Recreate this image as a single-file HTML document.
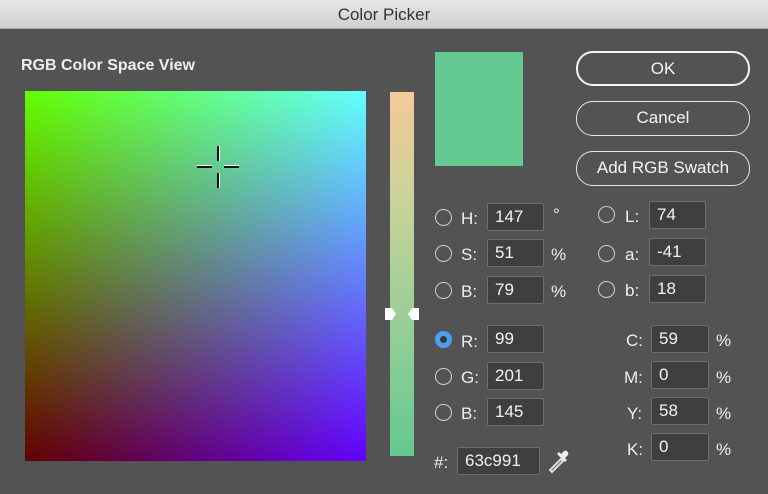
<!DOCTYPE html>
<html><head><meta charset="utf-8"><style>
*{margin:0;padding:0;box-sizing:border-box}
body{width:768px;height:494px;background:#535353;font-family:"Liberation Sans",sans-serif;color:#f0f0f0;position:relative;overflow:hidden}
.title{position:absolute;left:0;top:0;width:768px;height:29px;background:linear-gradient(#e6e6e6,#cfcfcf);border-bottom:1px solid #a8a8a8;text-align:center;font-size:17px;line-height:29px;color:#333}
.a{position:absolute}
.lbl{font-size:16px;font-weight:bold;color:#eee}
.sq{left:25px;top:91px;width:341px;height:370px;background:linear-gradient(to right,rgb(99,0,0),rgb(99,0,255))}
.sq2{position:absolute;inset:0;background:linear-gradient(rgb(0,255,0),rgb(0,0,0));mix-blend-mode:screen}
.bar{left:390px;top:92px;width:24px;height:364px;background:linear-gradient(#f5c998,#c9d39a 30%,#63c991)}
.sw{left:435px;top:52px;width:88px;height:114px;background:#63c991}
.btn{position:absolute;left:576px;width:174px;height:35px;border:2px solid #f4f4f4;border-radius:17px;text-align:center;font-size:17px;line-height:32px;color:#f4f4f4}
.btn.c{border-color:#e6e6e6;border-width:1.5px}
.f{position:absolute;height:28px;background:#3f3f3f;border:1.5px solid #6e6e6e;border-radius:2px;font-size:17px;line-height:26px;padding-left:7px;color:#f2f2f2}
.r{position:absolute;width:17px;height:17px;border:1.5px solid #cfcfcf;border-radius:50%}
.r.on{border:5px solid #4c9ff0;background:#3a3a3a}
.t{position:absolute;font-size:17px;color:#eee;margin-top:1px}
</style></head><body>
<div class="title">Color Picker</div>
<div class="a lbl" style="left:21px;top:57px">RGB Color Space View</div>
<div class="a sq"><div class="sq2"></div>
<svg class="a" style="left:170px;top:53px" width="46" height="46" viewBox="0 0 46 46">
<g stroke="#111" stroke-width="2"><line x1="23" y1="2" x2="23" y2="17"/><line x1="23" y1="29" x2="23" y2="44"/><line x1="2" y1="23" x2="17" y2="23"/><line x1="29" y1="23" x2="44" y2="23"/></g>
<g stroke="#fff" stroke-width="1"><line x1="24.5" y1="2" x2="24.5" y2="17"/><line x1="24.5" y1="29" x2="24.5" y2="44"/><line x1="2" y1="21.5" x2="17" y2="21.5"/><line x1="29" y1="21.5" x2="44" y2="21.5"/></g></svg>
</div>
<div class="a bar"></div>
<svg class="a" style="left:383px;top:307px" width="38" height="14"><polygon points="2,1 9,1 13,7 9,13 2,13" fill="#fff"/><polygon points="36,1 29,1 25,7 29,13 36,13" fill="#fff"/></svg>
<div class="a sw"></div>
<div class="btn" style="top:51px">OK</div>
<div class="btn c" style="top:101px">Cancel</div>
<div class="btn c" style="top:151px">Add RGB Swatch</div>

<div class="r" style="left:435px;top:209px"></div><div class="t" style="left:461px;top:208px">H:</div><div class="f" style="left:487px;top:203px;width:57px">147</div><div class="t" style="left:553px;top:204px">°</div>
<div class="r" style="left:435px;top:245px"></div><div class="t" style="left:461px;top:244px">S:</div><div class="f" style="left:487px;top:239px;width:57px">51</div><div class="t" style="left:551px;top:244px">%</div>
<div class="r" style="left:435px;top:282px"></div><div class="t" style="left:461px;top:281px">B:</div><div class="f" style="left:487px;top:276px;width:57px">79</div><div class="t" style="left:551px;top:281px">%</div>
<div class="r on" style="left:435px;top:331px"></div><div class="t" style="left:461px;top:331px">R:</div><div class="f" style="left:487px;top:325px;width:57px">99</div>
<div class="r" style="left:435px;top:368px"></div><div class="t" style="left:461px;top:367px">G:</div><div class="f" style="left:487px;top:362px;width:57px">201</div>
<div class="r" style="left:435px;top:404px"></div><div class="t" style="left:461px;top:403px">B:</div><div class="f" style="left:487px;top:398px;width:57px">145</div>
<div class="t" style="left:434px;top:452px">#:</div><div class="f" style="left:457px;top:447px;width:83px">63c991</div>
<svg class="a" style="left:546px;top:448px" width="28" height="28" viewBox="0 0 28 28"><path d="M6 24 L4 22 L15 11 L17 13 Z" fill="none" stroke="#ddd" stroke-width="2"/><path d="M14 9 L19 14 L21 12 L19 10 L22 7 A3 3 0 0 0 18 3 L15 6 L13 4 L11 6 Z" fill="#eee"/></svg>

<div class="r" style="left:598px;top:206px"></div><div class="t" style="left:625px;top:206px">L:</div><div class="f" style="left:649px;top:201px;width:57px">74</div>
<div class="r" style="left:598px;top:245px"></div><div class="t" style="left:625px;top:244px">a:</div><div class="f" style="left:649px;top:238px;width:57px">-41</div>
<div class="r" style="left:598px;top:281px"></div><div class="t" style="left:625px;top:280px">b:</div><div class="f" style="left:649px;top:275px;width:57px">18</div>

<div class="t" style="left:626px;top:330px">C:</div><div class="f" style="left:651px;top:325px;width:58px">59</div><div class="t" style="left:716px;top:330px">%</div>
<div class="t" style="left:624px;top:367px">M:</div><div class="f" style="left:651px;top:361px;width:58px">0</div><div class="t" style="left:716px;top:367px">%</div>
<div class="t" style="left:627px;top:403px">Y:</div><div class="f" style="left:651px;top:397px;width:58px">58</div><div class="t" style="left:716px;top:403px">%</div>
<div class="t" style="left:627px;top:439px">K:</div><div class="f" style="left:651px;top:433px;width:58px">0</div><div class="t" style="left:716px;top:439px">%</div>
</body></html>
